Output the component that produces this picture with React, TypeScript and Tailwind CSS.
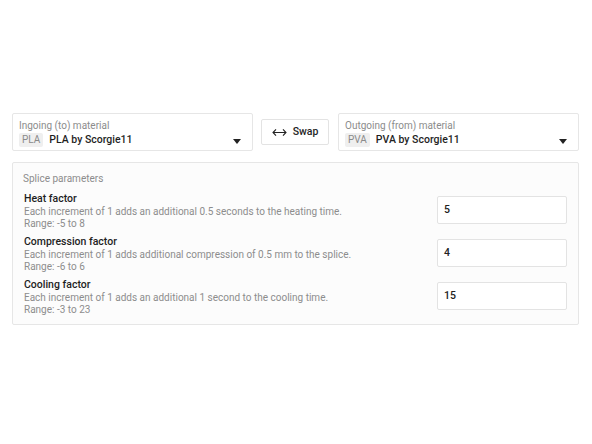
import React from "react";

function Select({ label, code, value }: { label: string; code: string; value: string }) {
  return (
    <div className="flex-1 h-[38px] border border-[#e6e6e6] bg-white rounded-[2px] px-[6px] pt-[5px] flex flex-col">
      <div className="text-[10px] leading-[13px] text-[#8c8c8c]">{label}</div>
      <div className="flex items-center mt-[1px]">
        <span className="bg-[#efefef] text-[#8a8a8a] text-[10px] leading-[14px] px-[3px] rounded-[2px]">{code}</span>
        <span className="ml-[6px] text-[10.5px] leading-[14px] text-[#1f1f1f] font-medium">{value}</span>
        <svg className="ml-auto mr-[5px] mt-[2px]" width="8" height="5" viewBox="0 0 8 5">
          <path d="M0 0 L8 0 L4 5 Z" fill="#222" />
        </svg>
      </div>
    </div>
  );
}

function Row({ title, desc, range, val }: { title: string; desc: string; range: string; val: string }) {
  return (
    <div className="flex items-center justify-between h-[40px]">
      <div className="flex flex-col pl-[1px]">
        <div className="text-[10.5px] leading-[14px] text-[#1e1e1e] font-medium">{title}</div>
        <div className="text-[10px] leading-[12px] text-[#8d8d8d]">{desc}</div>
        <div className="text-[10px] leading-[11px] text-[#8d8d8d]">{range}</div>
      </div>
      <div className="w-[130px] h-[28px] border border-[#e3e3e3] bg-white rounded-[2px] flex items-center px-[6px] text-[10.5px] text-[#222] font-medium">
        {val}
      </div>
    </div>
  );
}

export default function App() {
  return (
    <div className="w-[592px] h-[444px] bg-white px-[12px] pt-[113px]" style={{ fontFamily: "Roboto, 'Noto Sans', sans-serif" }}>
      <div className="w-[567px] flex items-center">
        <Select label="Ingoing (to) material" code="PLA" value="PLA by Scorgie11" />
        <button className="ml-[8px] mr-[9px] w-[68px] h-[26px] border border-[#e3e3e3] bg-white rounded-[2px] flex items-center justify-center gap-[6px] text-[10.5px] text-[#1f1f1f] font-medium">
          <svg width="15" height="9" viewBox="0 0 15 9" fill="none" stroke="#222" strokeWidth="1.1">
            <path d="M1 4.5 H14 M4 1.3 L1 4.5 L4 7.7 M11 1.3 L14 4.5 L11 7.7" />
          </svg>
          Swap
        </button>
        <Select label="Outgoing (from) material" code="PVA" value="PVA by Scorgie11" />
      </div>
      <div className="w-[567px] mt-[11px] border border-[#e6e6e6] bg-[#fcfcfc] rounded-[2px] pl-[10px] pr-[11px] pt-[9px] pb-[8px]">
        <div className="text-[10px] leading-[14px] text-[#8c8c8c] mb-[4px]">Splice parameters</div>
        <div className="flex flex-col gap-[3px]">
          <Row title="Heat factor" desc="Each increment of 1 adds an additional 0.5 seconds to the heating time." range="Range: -5 to 8" val="5" />
          <Row title="Compression factor" desc="Each increment of 1 adds additional compression of 0.5 mm to the splice." range="Range: -6 to 6" val="4" />
          <Row title="Cooling factor" desc="Each increment of 1 adds an additional 1 second to the cooling time." range="Range: -3 to 23" val="15" />
        </div>
      </div>
    </div>
  );
}
